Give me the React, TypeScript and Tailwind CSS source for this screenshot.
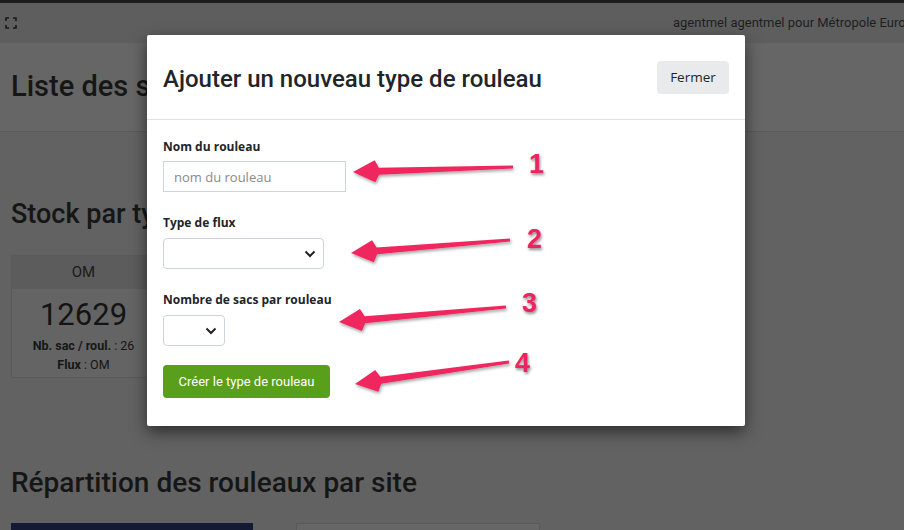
import React from "react";

const Arrow = ({ x1, y1, x2, y2 }: { x1: number; y1: number; x2: number; y2: number }) => {
    // arrow drawn from tail (x1,y1) to tip (x2,y2)
    const dx = x2 - x1;
    const dy = y2 - y1;
    const len = Math.sqrt(dx * dx + dy * dy);
    const ux = dx / len;
    const uy = dy / len;
    const px = -uy;
    const py = ux;
    const head = 26;
    const bx = x2 - ux * head;
    const by = y2 - uy * head;
    const pts = [
        `${x1 + px * 1.5},${y1 + py * 1.5}`,
        `${bx + px * 3.5},${by + py * 3.5}`,
        `${bx + ux * 4 + px * 11},${by + uy * 4 + py * 11}`,
        `${x2},${y2}`,
        `${bx + ux * 4 - px * 11},${by + uy * 4 - py * 11}`,
        `${bx - px * 3.5},${by - py * 3.5}`,
        `${x1 - px * 1.5},${y1 - py * 1.5}`,
    ].join(" ");
    return <polygon points={pts} fill="#f0255f" filter="url(#shadow)" />;
};

const Num = ({ x, y, n }: { x: number; y: number; n: string }) => (
    <div
        className="absolute text-[27px] font-black leading-none text-[#ec2461] font-['Liberation_Sans',sans-serif] [-webkit-text-stroke:2px_white] [paint-order:stroke_fill] [text-shadow:1px_2px_3px_rgba(0,0,0,0.45)]"
        style={{ left: x, top: y }}
    >
        {n}
    </div>
);

export default function App() {
    return (
        <div className="relative w-[904px] h-[530px] overflow-hidden bg-[#626262] font-['Roboto',sans-serif]">
            <div className="h-[3px] bg-[#1c1c1c]" />
            <div className="h-[40px] bg-[#5e5e5e] flex items-center pl-[5px] overflow-hidden">
                <svg className="shrink-0" width="12" height="12" viewBox="0 0 12 12" fill="none" stroke="#1a1a1a" strokeWidth="1.6">
                    <path d="M1 4V1h3M8 1h3v3M11 8v3H8M4 11H1V8" />
                </svg>
                <span className="ml-[656px] shrink-0 text-[13px] text-[#1e1e1e] whitespace-nowrap">
                    agentmel agentmel pour Métropole Européenne de Lille
                </span>
            </div>
            <div className="h-[89px] bg-[#666666] border-b border-[#595959] flex items-center px-[11px]">
                <h1 className="text-[29px] font-medium text-[#161616]">Liste des stocks</h1>
            </div>
            <div className="px-[11px]">
                <h2 className="mt-[69px] text-[27px] font-medium text-[#161616] leading-none">Stock par type</h2>
                <div className="mt-[27px] w-[145px] border border-[#5a5a5a] bg-[#646464]">
                    <div className="h-[33px] bg-[#5c5c5c] flex items-center justify-center text-[15px] text-[#1a1a1a]">OM</div>
                    <div className="flex flex-col items-center pt-[7px] pb-[3px]">
                        <div className="text-[31px] text-[#141414] leading-[38px]">12629</div>
                        <div className="text-[12.5px] text-[#161616] leading-[19px] mt-[2px]">
                            <b>Nb. sac / roul.</b> : 26
                        </div>
                        <div className="text-[12.5px] text-[#161616] leading-[19px]">
                            <b>Flux</b> : OM
                        </div>
                    </div>
                </div>
                <h2 className="mt-[91px] text-[28px] font-medium text-[#161616] leading-none">Répartition des rouleaux par site</h2>
                <div className="mt-[26px] flex gap-[43px]">
                    <div className="w-[242px] h-[40px] bg-[#141a33]" />
                    <div className="w-[244px] h-[40px] bg-[#666666] border border-[#5a5a5a]" />
                </div>
            </div>

            {/* modal */}
            <div className="absolute left-[147px] top-[35px] w-[598px] h-[391px] bg-white rounded-[2px] shadow-[0_6px_16px_rgba(0,0,0,0.55)]">
                <div className="h-[85px] border-b border-[#dee2e6] flex items-center justify-between pl-[16px] pr-[16px]">
                    <h3 className="text-[24px] font-medium text-[#212529] mt-[4px]">Ajouter un nouveau type de rouleau</h3>
                    <button className="h-[33px] w-[72px] bg-[#e9eaec] rounded-[4px] text-[13.5px] text-[#212529] font-['Open_Sans',sans-serif]">
                        Fermer
                    </button>
                </div>
                <div className="px-[16px] pt-[18px] flex flex-col items-start font-['Open_Sans',sans-serif]">
                    <label className="text-[12px] font-bold text-[#212529] leading-[17px]">Nom du rouleau</label>
                    <input
                        className="mt-[6px] w-[183px] h-[31px] border border-[#ced4da] px-[10px] text-[13px] outline-none placeholder:text-[#8a8a8a]"
                        placeholder="nom du rouleau"
                    />
                    <label className="mt-[22px] text-[12px] font-bold text-[#212529] leading-[17px]">Type de flux</label>
                    <div className="mt-[7px] w-[161px] h-[31px] border border-[#ced4da] rounded-[4px] flex items-center justify-end pr-[7px]">
                        <svg width="12" height="8" viewBox="0 0 12 8" fill="none" stroke="#222" strokeWidth="2">
                            <path d="M1.5 1.5l4.5 4.5 4.5-4.5" />
                        </svg>
                    </div>
                    <label className="mt-[22px] text-[12px] font-bold text-[#212529] leading-[17px]">Nombre de sacs par rouleau</label>
                    <div className="mt-[7px] w-[62px] h-[31px] border border-[#ced4da] rounded-[4px] flex items-center justify-end pr-[7px]">
                        <svg width="12" height="8" viewBox="0 0 12 8" fill="none" stroke="#222" strokeWidth="2">
                            <path d="M1.5 1.5l4.5 4.5 4.5-4.5" />
                        </svg>
                    </div>
                    <button className="mt-[19px] w-[167px] h-[33px] bg-[#5a9f1b] rounded-[4px] text-white text-[13px] font-['Roboto',sans-serif]">
                        Créer le type de rouleau
                    </button>
                </div>
            </div>

            {/* annotation arrows */}
            <svg className="absolute left-0 top-0" width="904" height="530">
                <defs>
                    <filter id="shadow" x="-10%" y="-50%" width="120%" height="200%">
                        <feDropShadow dx="1" dy="2" stdDeviation="1.5" floodColor="#000" floodOpacity="0.35" />
                    </filter>
                </defs>
                <Arrow x1={513} y1={167} x2={353} y2={172} />
                <Arrow x1={510} y1={240} x2={351} y2={253} />
                <Arrow x1={506} y1={307} x2={339} y2={322} />
                <Arrow x1={509} y1={362} x2={355} y2={384} />
            </svg>
            <Num x={529} y={151} n="1" />
            <Num x={527} y={226} n="2" />
            <Num x={522} y={290} n="3" />
            <Num x={515} y={350} n="4" />
        </div>
    );
}
